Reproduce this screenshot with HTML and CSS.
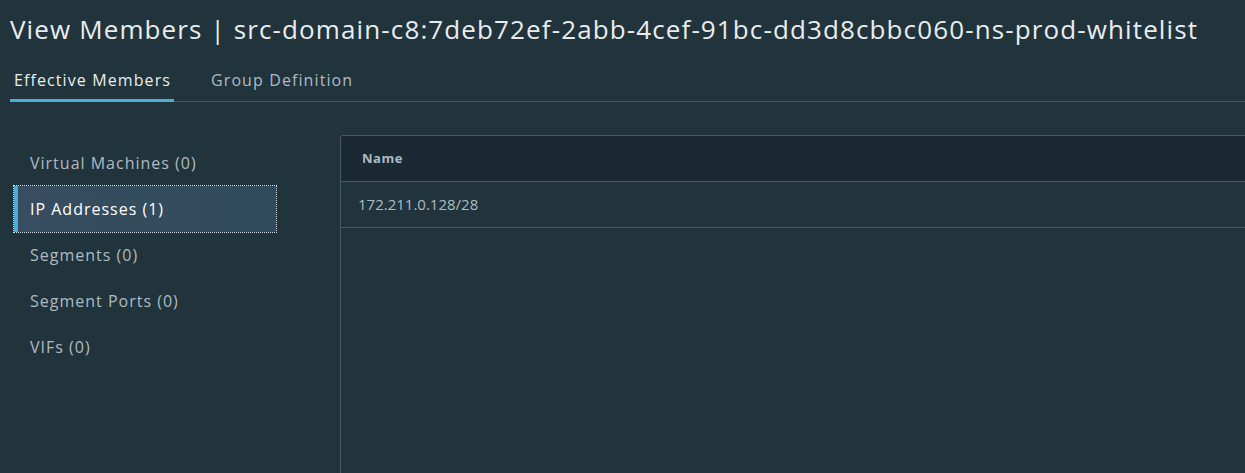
FILE: index.html
```html
<!DOCTYPE html>
<html>
<head>
<meta charset="utf-8">
<link rel="stylesheet" href="styles.css">
</head>
<body>
<h1 class="title">View Members | src-domain-c8:7deb72ef-2abb-4cef-91bc-dd3d8cbbc060-ns-prod-whitelist</h1>
<nav class="tabs">
  <div class="tab active">Effective Members</div>
  <div class="tab">Group Definition</div>
</nav>
<main class="main">
  <ul class="side">
    <li class="item">Virtual Machines (0)</li>
    <li class="item selected">IP Addresses (1)</li>
    <li class="item">Segments (0)</li>
    <li class="item">Segment Ports (0)</li>
    <li class="item">VIFs (0)</li>
  </ul>
  <section class="grid">
    <div class="head">Name</div>
    <div class="row">172.211.0.128/28</div>
  </section>
</main>
</body>
</html>
```
FILE: styles.css
```css
html, body {
  margin: 0;
  padding: 0;
  height: 100%;
  overflow: hidden;
}
body {
  background: #21333b;
  font-family: "Open Sans", "Noto Sans", sans-serif;
  color: #adbbc4;
}
.title {
  margin: 0;
  padding: 10px 0 0 10px;
  height: 39px;
  font-size: 26px;
  font-weight: 400;
  letter-spacing: 1.12px;
  line-height: 38px;
  color: #e9ecef;
  white-space: nowrap;
}
.tabs {
  display: flex;
  margin-left: 10px;
  margin-top: 14px;
  border-bottom: 1px solid #485764;
  height: 38px;
}
.tab {
  font-size: 16px;
  letter-spacing: 1.1px;
  line-height: 34px;
  padding: 0 4px;
  margin-right: 33px;
  color: #adbbc4;
}
.tab.active {
  color: #eaedf0;
  border-bottom: 3px solid #49afd9;
  padding: 0 3px 0 4px;
  margin-bottom: -1px;
}
.main {
  display: flex;
  align-items: flex-start;
  height: 372px;
}
.side {
  list-style: none;
  margin: 38px 0 0 14px;
  padding: 0;
  width: 262px;
}
.item {
  height: 46px;
  line-height: 46px;
  padding-left: 16px;
  font-size: 16px;
  letter-spacing: 1px;
  color: #adbbc4;
  box-sizing: border-box;
}
.item.selected {
  background: linear-gradient(90deg, #384d60, #2f4b5c);
  color: #ffffff;
  border-left: 4px solid #49afd9;
  padding-left: 12px;
  outline: 1px dotted #d8dde2;
}
.grid {
  margin: 33px 0 0 64px;
  flex: 1;
  align-self: stretch;
  border: 1px solid #485764;
  border-right: none;
  border-bottom: none;
  border-top-left-radius: 3px;
}
.head {
  height: 45px;
  line-height: 45px;
  background: #1b2a32;
  border-bottom: 1px solid #485764;
  padding-left: 21px;
  font-size: 13px;
  font-weight: 700;
  letter-spacing: 0.5px;
  color: #adbbc4;
  border-top-left-radius: 3px;
}
.row {
  height: 45px;
  line-height: 45px;
  border-bottom: 1px solid #485764;
  padding-left: 17px;
  font-size: 15px;
  letter-spacing: 0;
  color: #adbbc4;
}
```
